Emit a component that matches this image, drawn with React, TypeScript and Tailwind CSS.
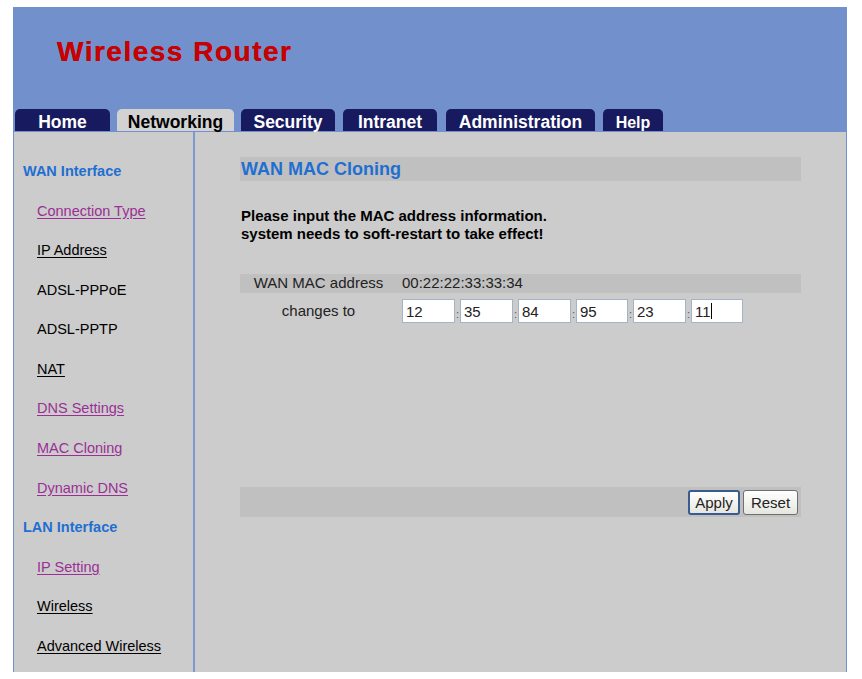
import React from 'react';

const font = { fontFamily: '"Liberation Sans", Arial, sans-serif' };

const tabs = [
  { label: 'Home', w: 'w-[95px]', ml: 'ml-0' },
  { label: 'Networking', w: 'w-[117px]', ml: 'ml-[7px]', active: true },
  { label: 'Security', w: 'w-[94px]', ml: 'ml-[7px]' },
  { label: 'Intranet', w: 'w-[94px]', ml: 'ml-[8px]' },
  { label: 'Administration', w: 'w-[149px]', ml: 'ml-[9px]' },
  { label: 'Help', w: 'w-[60px]', ml: 'ml-[8px]', small: true },
];

const menu = [
  { label: 'WAN Interface', kind: 'head' },
  { label: 'Connection Type', kind: 'visited' },
  { label: 'IP Address', kind: 'link' },
  { label: 'ADSL-PPPoE', kind: 'plain' },
  { label: 'ADSL-PPTP', kind: 'plain' },
  { label: 'NAT', kind: 'link' },
  { label: 'DNS Settings', kind: 'visited' },
  { label: 'MAC Cloning', kind: 'visited' },
  { label: 'Dynamic DNS', kind: 'visited' },
  { label: 'LAN Interface', kind: 'head' },
  { label: 'IP Setting', kind: 'visited' },
  { label: 'Wireless', kind: 'link' },
  { label: 'Advanced Wireless', kind: 'link' },
];

const macParts = ['12', '35', '84', '95', '23', '11'];
const macWidths = ['w-[53px]', 'w-[53px]', 'w-[53px]', 'w-[52px]', 'w-[53px]', 'w-[52px]'];

function MenuItem({ label, kind }: { label: string; kind: string }) {
  if (kind === 'head') {
    return (
      <div className="h-[39.6px] flex items-center pl-[9px] text-[14.5px] font-bold text-[#1f6fd2]">
        {label}
      </div>
    );
  }
  const color =
    kind === 'visited' ? 'text-[#9b2f96] underline' : kind === 'link' ? 'text-black underline' : 'text-black';
  return (
    <div className="h-[39.6px] flex items-center pl-[23px] text-[14.5px]">
      <a href="#" className={`${color} underline-offset-2`}>
        {label}
      </a>
    </div>
  );
}

export default function App() {
  return (
    <div className="min-h-screen bg-white pt-[7px] pl-[13px]" style={font}>
      <div className="w-[834px]">
        {/* header */}
        <div className="h-[125px] bg-[#7190cc] flex flex-col">
          <div className="pt-[29px] pl-[44px] text-[28px] leading-[32px] font-bold tracking-[1.5px] text-[#c80000] [text-shadow:0_0_0.6px_#c80000]">
            Wireless Router
          </div>
          <div className="mt-auto mb-[1px] pl-[2px] flex items-end">
            {tabs.map(t => (
              <div
                key={t.label}
                className={`${t.w} ${t.ml} h-[22px] rounded-t-[5px] flex items-center justify-center font-bold leading-none pt-[5px] ${
                  t.active ? 'bg-[#d2d2d2] text-black' : 'bg-[#171a5e] text-white'
                } ${t.small ? 'text-[16px]' : 'text-[17.5px]'}`}
              >
                {t.label}
              </div>
            ))}
          </div>
        </div>

        {/* body */}
        <div className="h-[540px] flex bg-[#cccccc] border-l border-r border-[#7190cc]">
          <div className="w-[181px] border-r-2 border-[#7f98d4] pt-[20px]">
            {menu.map(m => (
              <MenuItem key={m.label} label={m.label} kind={m.kind} />
            ))}
          </div>

          <div className="flex-1 pl-[45px] pt-[25px]">
            <div className="w-[561px]">
              <div className="h-[24px] bg-[#c0c0c0] pl-[1px] leading-[24px] text-[18px] font-bold text-[#1f6fd2]">
                WAN MAC Cloning
              </div>

              <p className="mt-[26px] pl-[1px] text-[15px] leading-[18px] font-bold text-black">
                Please input the MAC address information.
                <br />
                system needs to soft-restart to take effect!
              </p>

              <div className="mt-[31px] text-[15px] text-[#222]">
                <div className="h-[19px] bg-[#c0c0c0] flex items-center">
                  <div className="w-[157px] text-center">WAN MAC address</div>
                  <div className="pl-[5px]">00:22:22:33:33:34</div>
                </div>
                <div className="pt-[6px] flex items-center">
                  <div className="w-[157px] text-center">changes to</div>
                  <div className="pl-[5px] flex items-center">
                    {macParts.map((p, i) => (
                      <React.Fragment key={i}>
                        {i > 0 && (
                          <span className="w-[5px] text-center text-[11px] text-[#555] leading-none pt-[6px]">:</span>
                        )}
                        <span className="relative">
                          <input
                            readOnly
                            value={p}
                            className={`${macWidths[i]} h-[24px] bg-white border border-[#a4b3c6] pl-[3px] text-[15px] text-[#222] outline-none`}
                            style={font}
                          />
                          {i === macParts.length - 1 && (
                            <span className="absolute left-[20px] top-[4px] w-[1px] h-[16px] bg-black" />
                          )}
                        </span>
                      </React.Fragment>
                    ))}
                  </div>
                </div>
              </div>

              <div className="mt-[164px] h-[30px] bg-[#c0c0c0] flex items-center justify-end pr-[3px] gap-[3px]">
                <button
                  className="w-[52px] h-[25px] rounded-[3px] border-2 border-[#3a5a92] bg-gradient-to-b from-white to-[#e6e6e0] text-[15px] text-[#222] leading-none"
                  style={font}
                >
                  Apply
                </button>
                <button
                  className="w-[55px] h-[25px] rounded-[3px] border border-[#6f6f6f] bg-gradient-to-b from-white to-[#e6e6e0] text-[15px] text-[#222] leading-none"
                  style={font}
                >
                  Reset
                </button>
              </div>
            </div>
          </div>
        </div>
      </div>
    </div>
  );
}
